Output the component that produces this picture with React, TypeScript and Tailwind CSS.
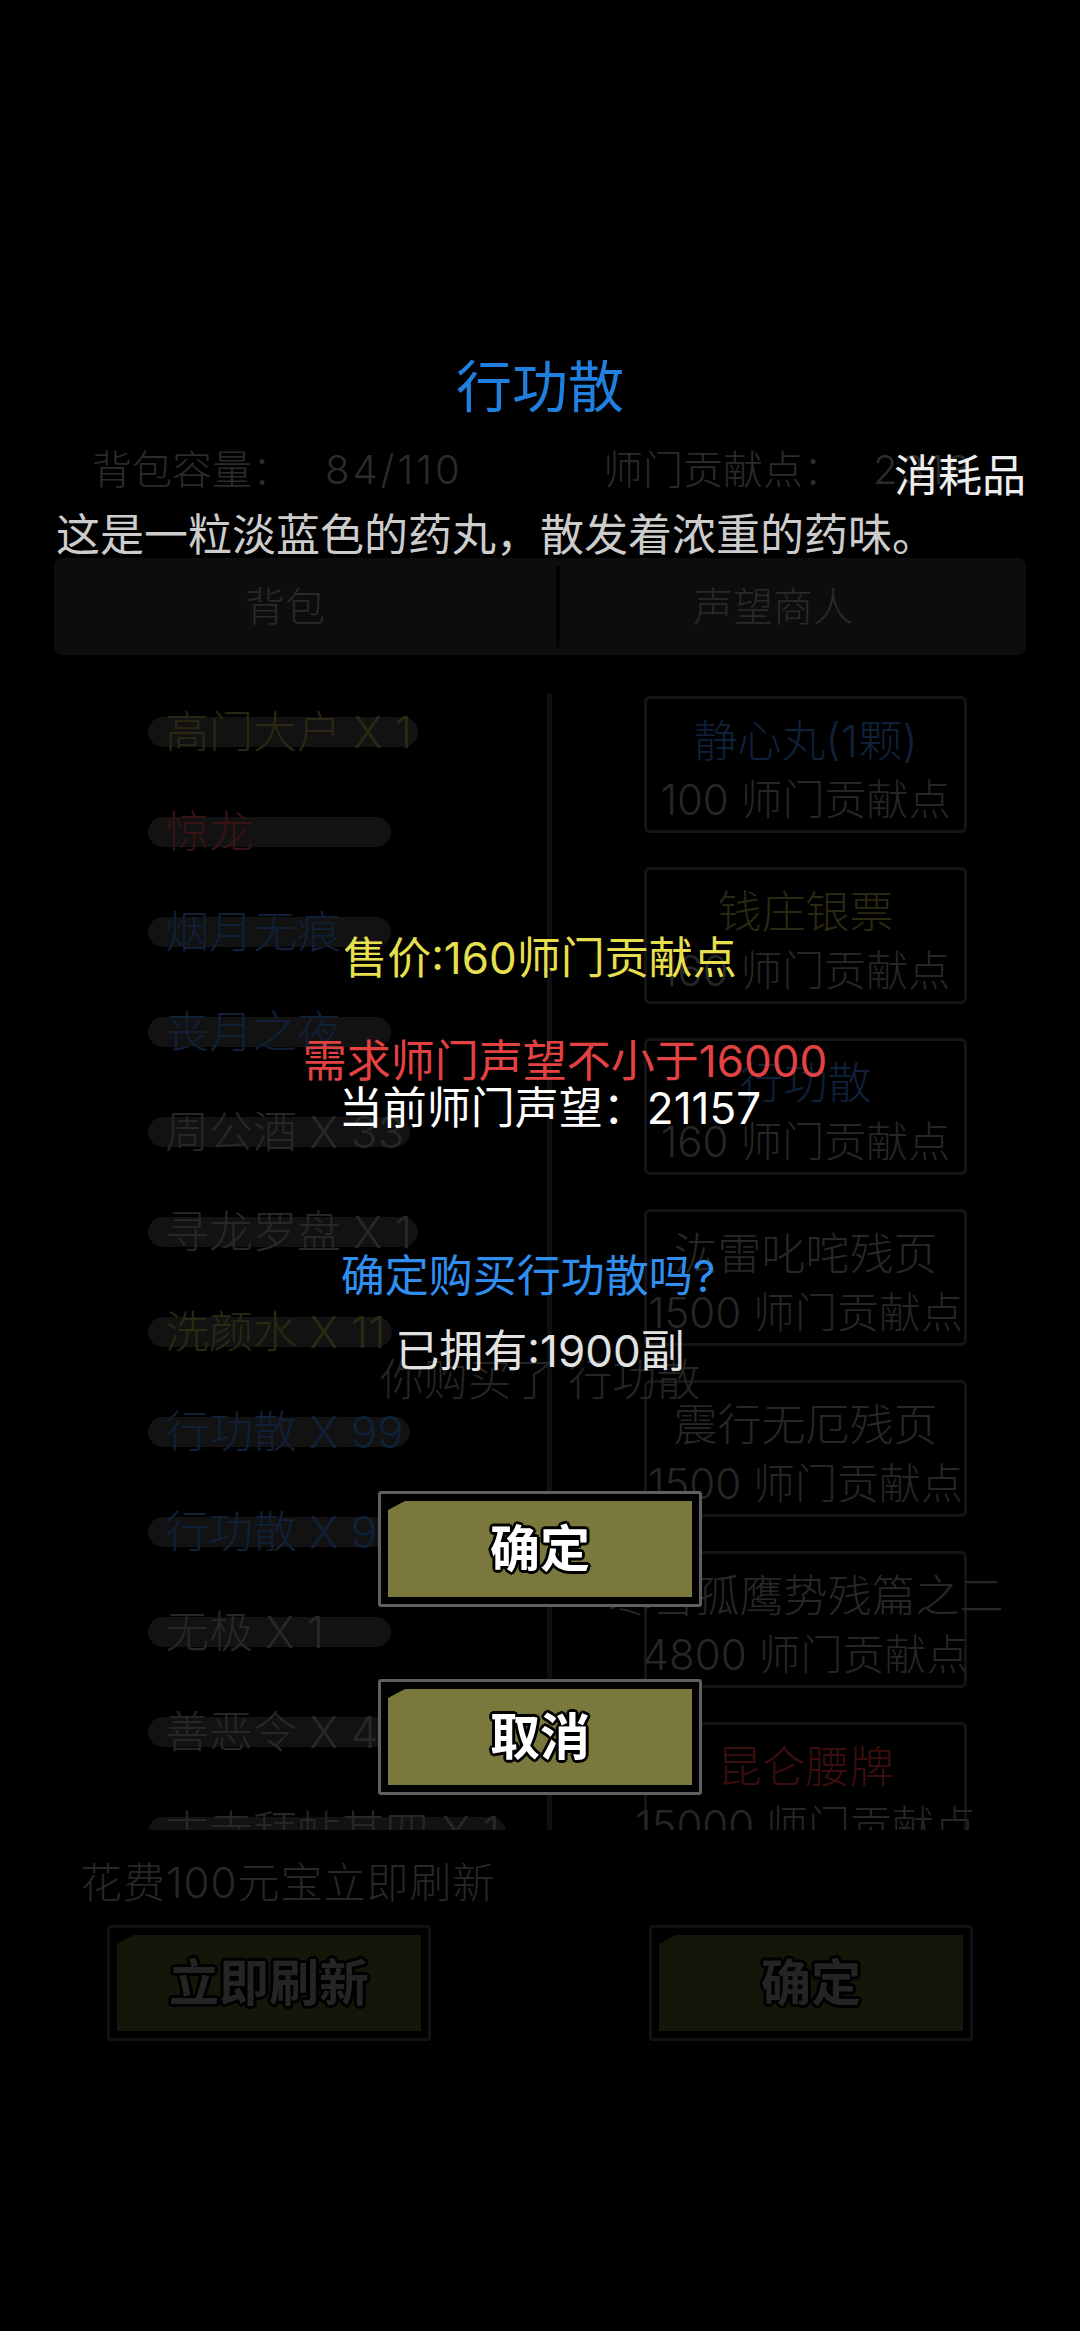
import React from 'react';

const outline =
  '[text-shadow:3px_0_0_#000,-3px_0_0_#000,0_3px_0_#000,0_-3px_0_#000,2px_2px_0_#000,-2px_-2px_0_#000,2px_-2px_0_#000,-2px_2px_0_#000]';

const bagItems = [
  { name: '高门大户 X 1', color: 'text-[#2b2712]' },
  { name: '惊龙', color: 'text-[#381313]' },
  { name: '烟月无痕', color: 'text-[#0f2037]' },
  { name: '丧月之夜', color: 'text-[#0f2037]' },
  { name: '周公酒 X 33', color: 'text-[#272727]' },
  { name: '寻龙罗盘 X 1', color: 'text-[#272727]' },
  { name: '洗颜水 X 11', color: 'text-[#2a2912]' },
  { name: '行功散 X 99', color: 'text-[#0f2037]' },
  { name: '行功散 X 99', color: 'text-[#0f2037]' },
  { name: '无极 X 1', color: 'text-[#272727]' },
  { name: '善恶令 X 45', color: 'text-[#272727]' },
  { name: '古寺拜帖其四 X 1', color: 'text-[#272727]' },
];

const shopItems = [
  { name: '静心丸(1颗)', cost: '100 师门贡献点', color: 'text-[#0f2139]' },
  { name: '钱庄银票', cost: '160 师门贡献点', color: 'text-[#2b2912]' },
  { name: '行功散', cost: '160 师门贡献点', color: 'text-[#0f2139]' },
  { name: '汯雷叱咤残页', cost: '1500 师门贡献点', color: 'text-[#272727]' },
  { name: '震行无厄残页', cost: '1500 师门贡献点', color: 'text-[#272727]' },
  { name: '寒雪孤鹰势残篇之二', cost: '4800 师门贡献点', color: 'text-[#272727]' },
  { name: '昆仑腰牌', cost: '15000 师门贡献点', color: 'text-[#3b0e0e]' },
];

function OliveButton({ label, dim }: { label: string; dim?: boolean }) {
  return (
    <div
      className={
        dim
          ? 'w-[324px] h-[116px] rounded-[3px] border-[3px] border-[#111111] bg-black p-[7px]'
          : 'w-[324px] h-[116px] rounded-[3px] border-[3px] border-[#5f5f5f] bg-black p-[7px]'
      }
    >
      <div
        className={`h-full flex items-center justify-center [clip-path:polygon(17px_0,100%_0,100%_100%,0_100%,0_9px)] ${
          dim ? 'bg-[#15150a]' : 'bg-[#7a783c]'
        }`}
      >
        <span className={`text-[50px] leading-none font-bold ${dim ? 'text-[#242424]' : 'text-white'} ${outline}`}>
          {label}
        </span>
      </div>
    </div>
  );
}

export default function App() {
  return (
    <div className="relative w-[1080px] h-[2331px] overflow-hidden bg-black font-['Inter','Noto_Sans_CJK_SC',sans-serif]">
      {/* Dimmed shop screen */}
      <div className="flex flex-col pt-[446px]">
        {/* Capacity / points */}
        <div className="flex h-[48px] items-center text-[40px] leading-[48px] font-light text-[#2b2b2b] whitespace-nowrap">
          <div className="pl-[92px] w-[603px] flex">
            <span>背包容量：</span>
            <span className="ml-[33px] tracking-[3px]">84/110</span>
          </div>
          <div className="flex">
            <span>师门贡献点：</span>
            <span className="ml-[30px] tracking-[3px]">2318</span>
          </div>
        </div>

        {/* Tabs */}
        <div className="mt-[64px] mx-[54px] h-[97px] rounded-lg bg-[#0d0d0d] flex text-[40px] font-light text-[#292929]">
          <div className="w-[502px] flex items-center justify-center pr-[40px]">背包</div>
          <div className="w-[4px] my-[8px] bg-[#030303]" />
          <div className="flex-1 flex items-center justify-center pr-[40px]">声望商人</div>
        </div>

        {/* Lists */}
        <div className="h-[1175px] overflow-hidden mx-[54px] flex">
          <div className="w-[493px] pt-[27px] flex flex-col">
            {bagItems.map((item, i) => (
              <div key={i} className="h-[100px] shrink-0 flex items-center pl-[94px]">
                <div className="inline-flex items-center h-[30px] min-w-[243px] rounded-full bg-[#121212] pl-[17px] pr-[6px]">
                  <span className={`text-[44px] leading-none font-light whitespace-nowrap ${item.color}`}>{item.name}</span>
                </div>
              </div>
            ))}
          </div>
          <div className="w-[5px] mt-[38px] bg-[#0f0f0f]" />
          <div className="flex-1 pt-[41px] flex flex-col gap-[34px]">
            {shopItems.map((item, i) => (
              <div
                key={i}
                className="w-[323px] h-[137px] shrink-0 ml-[92px] rounded-md border-[3px] border-[#151515] flex flex-col items-center pt-[13px] font-light"
              >
                <span className={`text-[44px] leading-[58px] whitespace-nowrap ${item.color}`}>{item.name}</span>
                <span className="text-[42px] leading-[60px] whitespace-nowrap text-[#262626]">{item.cost}</span>
              </div>
            ))}
          </div>
        </div>

        {/* Refresh */}
        <div className="mt-[29px] pl-[80px] text-[42px] leading-[48px] font-light text-[#272727] tracking-[1px]">
          花费100元宝立即刷新
        </div>
        <div className="mt-[18px] flex pl-[107px] gap-[218px]">
          <OliveButton label="立即刷新" dim />
          <OliveButton label="确定" dim />
        </div>
      </div>

      {/* Faded toast behind the dialog */}
      <div className="absolute left-0 right-0 top-[1352px] text-center text-[44px] leading-[56px] font-light text-[#252525]">
        你购买了 行功散
      </div>

      {/* Item detail + purchase confirm */}
      <div className="absolute inset-0 flex flex-col">
        <div className="pt-[355px] text-center text-[56px] leading-[64px] text-[#1f80e0]">行功散</div>
        <div className="mt-[31px] pr-[54px] text-right text-[44px] leading-[52px] text-[#eeeeee]">消耗品</div>
        <div className="mt-[7px] pl-[56px] text-[44px] leading-[52px] text-[#cccccc] whitespace-nowrap">
          这是一粒淡蓝色的药丸，散发着浓重的药味。
        </div>

        <div className="mt-[371px] text-center text-[44px] leading-[52px] text-[#e6df4e]">售价:160师门贡献点</div>
        <div className="mt-[54px] pl-[50px] text-center text-[44px] leading-[47px] text-[#e34242]">需求师门声望不小于16000</div>
        <div className="pl-[20px] text-center text-[44px] leading-[47px] text-white">当前师门声望：21157</div>
        <div className="mt-[118px] pr-[24px] text-center text-[44px] leading-[52px] text-[#2f8ef0]">确定购买行功散吗?</div>
        <div className="mt-[23px] text-center text-[44px] leading-[52px] text-[#e2e2e2]">已拥有:1900副</div>

        <div className="mt-[114px] flex flex-col items-center gap-[72px]">
          <OliveButton label="确定" />
          <OliveButton label="取消" />
        </div>
      </div>
    </div>
  );
}
